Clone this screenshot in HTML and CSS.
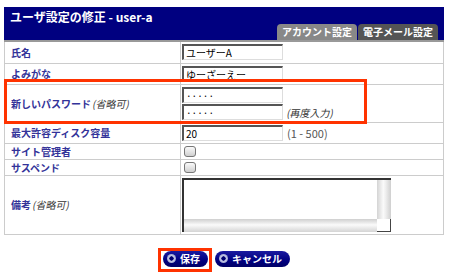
FILE: index.html
```html
<!DOCTYPE html>
<html lang="ja">
<head>
  <meta charset="UTF-8" />
  <title>ユーザ設定の修正</title>
  <link rel="stylesheet" href="styles.css">
</head>
<body>

  <div class="panel">
    <div class="panel-head">
      <h1>ユーザ設定の修正 - user-a</h1>
      <div class="tabs">
        <span class="tab active">アカウント設定</span>
        <span class="tab">電子メール設定</span>
      </div>
    </div>

    <div class="form-wrap">
      <table class="form">
        <tr class="r-text">
          <th>氏名</th>
          <td><input type="text" value="ユーザーA"></td>
        </tr>
        <tr class="r-text">
          <th>よみがな</th>
          <td><input type="text" value="ゆーざーえー"></td>
        </tr>
        <tr class="r-pass">
          <th>新しいパスワード <em>(省略可)</em></th>
          <td>
            <div class="pass-pair">
              <div class="pass-fields">
                <input type="text" value="·····">
                <input type="text" value="·····">
              </div>
              <em class="hint">(再度入力)</em>
            </div>
          </td>
        </tr>
        <tr class="r-text">
          <th>最大許容ディスク容量</th>
          <td>
            <div class="with-range">
              <input type="text" value="20">
              <span class="range">(1 - 500)</span>
            </div>
          </td>
        </tr>
        <tr class="r-check">
          <th>サイト管理者</th>
          <td><span class="check"></span></td>
        </tr>
        <tr class="r-check">
          <th>サスペンド</th>
          <td><span class="check"></span></td>
        </tr>
        <tr class="r-memo">
          <th>備考 <em>(省略可)</em></th>
          <td>
            <div class="memo">
              <textarea></textarea>
              <div class="sb-v"></div>
              <div class="sb-h"></div>
              <div class="sb-corner"></div>
            </div>
          </td>
        </tr>
      </table>
      <!-- highlight around password row -->
      <div class="mark-pass"></div>
    </div>
  </div>

  <div class="actions">
    <span class="mark-btn">
      <button class="btn"><span class="dot"></span>保存</button>
    </span>
    <button class="btn"><span class="dot"></span>キャンセル</button>
  </div>

</body>
</html>
```

FILE: styles.css
```css
* { margin: 0; padding: 0; box-sizing: border-box; }
body {
  background: #fff;
  font-family: "Noto Sans CJK JP", "Noto Sans", sans-serif;
  font-size: 10px;
  color: #222;
}
.panel {
  width: 440px;
  margin: 7px 0 0 4px;
}
.panel-head {
  background: #000080;
  padding: 3px 6px 0 6px;
  border-bottom: 2px solid #999;
}
.panel-head h1 {
  color: #fff;
  font-size: 12px;
  font-weight: bold;
  line-height: 14px;
}
.tabs {
  display: flex;
  justify-content: flex-end;
  gap: 1px;
}
.tab {
  height: 16px;
  line-height: 16px;
  padding: 0 5px;
  background: #555;
  color: #fff;
  font-weight: bold;
  border-radius: 4px 4px 0 0;
}
.tab.active {
  background: #888;
}

/* Form table */
.form-wrap {
  position: relative;
}
.form {
  width: 100%;
  border-collapse: collapse;
  border: 1px solid #ccc;
  border-top: none;
}
.form th, .form td {
  border-bottom: 1px solid #ccc;
  vertical-align: middle;
}
.form th {
  width: 176px;
  text-align: left;
  padding-left: 6px;
  color: #333399;
  font-weight: bold;
  border-right: 1px solid #ccc;
}
.form em {
  display: inline-block;
  transform: skewX(-12deg);
  font-style: normal;
}
.form th em {
  color: #333;
  font-weight: normal;
}
.form td {
  padding: 2px 2px 2px 1px;
  line-height: 0;
}
input[type=text] {
  width: 101px;
  height: 16px;
  padding: 0 2px;
  font: inherit;
  font-size: 10px;
  line-height: 14px;
  color: #000;
  border: none;
  border-top: 2px solid #555;
  border-left: 2px solid #555;
  border-right: 1px solid #ddd;
  border-bottom: 1px solid #ddd;
  vertical-align: middle;
}
.pass-pair {
  display: flex;
  align-items: flex-end;
  gap: 4px;
}
.pass-fields {
  display: flex;
  flex-direction: column;
  gap: 1px;
}
.hint {
  line-height: 14px;
  color: #333;
}
.with-range {
  display: flex;
  align-items: center;
  gap: 4px;
}
.range {
  font-size: 11px;
  line-height: 16px;
  color: #555;
}
.r-text td { height: 21px; }
.r-check td { height: 15px; padding-left: 3px; }
.check {
  display: inline-block;
  width: 12px;
  height: 11px;
  border: 1px solid #777;
  border-radius: 3px;
  background: linear-gradient(#fafafa, #cfcfcf);
  vertical-align: middle;
}

/* Memo box with its scrollbars */
.memo {
  display: grid;
  grid-template-columns: 1fr 14px;
  grid-template-rows: 1fr 13px;
  width: 209px;
  height: 54px;
  border-top: 2px solid #333;
  border-left: 2px solid #333;
}
.memo textarea {
  border: none;
  resize: none;
  overflow: hidden;
  font: inherit;
}
.sb-v {
  background: linear-gradient(90deg, #d4d4d4, #fafafa 45%, #f0f0f0 60%, #cfcfcf);
}
.sb-h {
  background: linear-gradient(#cfcfcf, #fafafa 45%, #f0f0f0 60%, #d4d4d4);
}
.sb-corner {
  background: #fff;
  border-right: 1px solid #444;
  border-bottom: 1px solid #444;
}
.mark-pass {
  position: absolute;
  left: 0;
  top: 37px;
  width: 363px;
  height: 45px;
  border: 3px solid #ff3300;
  pointer-events: none;
}

/* Buttons */
.actions {
  width: 440px;
  margin: 16px 0 0 4px;
  display: flex;
  justify-content: center;
  align-items: flex-start;
  gap: 3px;
}
.mark-btn {
  margin-top: -3px;
  padding: 0 1px 2px 2px;
  border: 3px solid #ff3300;
}
.btn {
  display: flex;
  align-items: center;
  gap: 4px;
  height: 16px;
  padding: 0 8px 0 4px;
  border: none;
  border-radius: 8px;
  background: linear-gradient(#1a1aa0, #000080 60%, #000066);
  color: #fff;
  font: inherit;
  font-size: 10px;
  font-weight: bold;
}
.btn .dot {
  width: 9px;
  height: 9px;
  border-radius: 50%;
  background: radial-gradient(circle, #000070 30%, #c8cce8 38%, #8088c0);
}
```
